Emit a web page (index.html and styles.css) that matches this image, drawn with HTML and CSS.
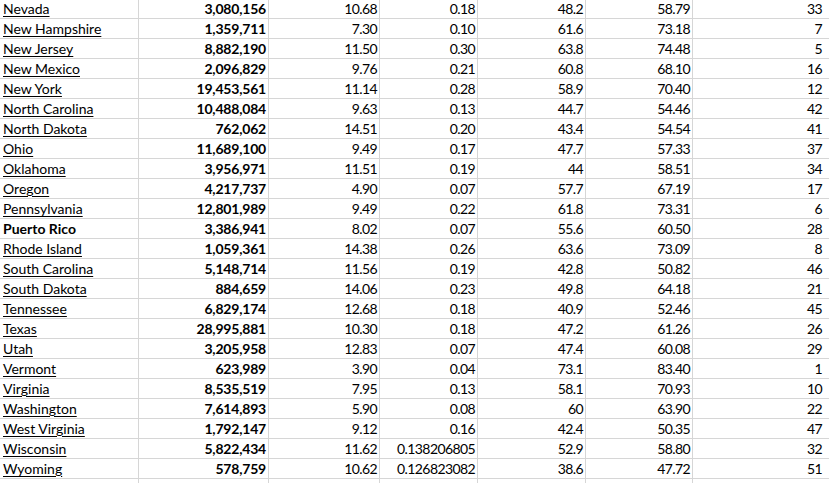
FILE: index.html
```html
<!DOCTYPE html>
<html>
<head>
<meta charset="utf-8">
<link rel="stylesheet" href="styles.css">
</head>
<body>
<div class="sheet">
<div class="row"><div class="c name link">Nevada</div><div class="c num pop">3,080,156</div><div class="c num">10.68</div><div class="c num">0.18</div><div class="c num">48.2</div><div class="c num">58.79</div><div class="c num last">33</div></div>
<div class="row"><div class="c name link">New Hampshire</div><div class="c num pop">1,359,711</div><div class="c num">7.30</div><div class="c num">0.10</div><div class="c num">61.6</div><div class="c num">73.18</div><div class="c num last">7</div></div>
<div class="row"><div class="c name link">New Jersey</div><div class="c num pop">8,882,190</div><div class="c num">11.50</div><div class="c num">0.30</div><div class="c num">63.8</div><div class="c num">74.48</div><div class="c num last">5</div></div>
<div class="row"><div class="c name link">New Mexico</div><div class="c num pop">2,096,829</div><div class="c num">9.76</div><div class="c num">0.21</div><div class="c num">60.8</div><div class="c num">68.10</div><div class="c num last">16</div></div>
<div class="row"><div class="c name link">New York</div><div class="c num pop">19,453,561</div><div class="c num">11.14</div><div class="c num">0.28</div><div class="c num">58.9</div><div class="c num">70.40</div><div class="c num last">12</div></div>
<div class="row"><div class="c name link">North Carolina</div><div class="c num pop">10,488,084</div><div class="c num">9.63</div><div class="c num">0.13</div><div class="c num">44.7</div><div class="c num">54.46</div><div class="c num last">42</div></div>
<div class="row"><div class="c name link">North Dakota</div><div class="c num pop">762,062</div><div class="c num">14.51</div><div class="c num">0.20</div><div class="c num">43.4</div><div class="c num">54.54</div><div class="c num last">41</div></div>
<div class="row"><div class="c name link">Ohio</div><div class="c num pop">11,689,100</div><div class="c num">9.49</div><div class="c num">0.17</div><div class="c num">47.7</div><div class="c num">57.33</div><div class="c num last">37</div></div>
<div class="row"><div class="c name link">Oklahoma</div><div class="c num pop">3,956,971</div><div class="c num">11.51</div><div class="c num">0.19</div><div class="c num">44</div><div class="c num">58.51</div><div class="c num last">34</div></div>
<div class="row"><div class="c name link">Oregon</div><div class="c num pop">4,217,737</div><div class="c num">4.90</div><div class="c num">0.07</div><div class="c num">57.7</div><div class="c num">67.19</div><div class="c num last">17</div></div>
<div class="row"><div class="c name link">Pennsylvania</div><div class="c num pop">12,801,989</div><div class="c num">9.49</div><div class="c num">0.22</div><div class="c num">61.8</div><div class="c num">73.31</div><div class="c num last">6</div></div>
<div class="row"><div class="c name bold">Puerto Rico</div><div class="c num pop">3,386,941</div><div class="c num">8.02</div><div class="c num">0.07</div><div class="c num">55.6</div><div class="c num">60.50</div><div class="c num last">28</div></div>
<div class="row"><div class="c name link">Rhode Island</div><div class="c num pop">1,059,361</div><div class="c num">14.38</div><div class="c num">0.26</div><div class="c num">63.6</div><div class="c num">73.09</div><div class="c num last">8</div></div>
<div class="row"><div class="c name link">South Carolina</div><div class="c num pop">5,148,714</div><div class="c num">11.56</div><div class="c num">0.19</div><div class="c num">42.8</div><div class="c num">50.82</div><div class="c num last">46</div></div>
<div class="row"><div class="c name link">South Dakota</div><div class="c num pop">884,659</div><div class="c num">14.06</div><div class="c num">0.23</div><div class="c num">49.8</div><div class="c num">64.18</div><div class="c num last">21</div></div>
<div class="row"><div class="c name link">Tennessee</div><div class="c num pop">6,829,174</div><div class="c num">12.68</div><div class="c num">0.18</div><div class="c num">40.9</div><div class="c num">52.46</div><div class="c num last">45</div></div>
<div class="row"><div class="c name link">Texas</div><div class="c num pop">28,995,881</div><div class="c num">10.30</div><div class="c num">0.18</div><div class="c num">47.2</div><div class="c num">61.26</div><div class="c num last">26</div></div>
<div class="row"><div class="c name link">Utah</div><div class="c num pop">3,205,958</div><div class="c num">12.83</div><div class="c num">0.07</div><div class="c num">47.4</div><div class="c num">60.08</div><div class="c num last">29</div></div>
<div class="row"><div class="c name link">Vermont</div><div class="c num pop">623,989</div><div class="c num">3.90</div><div class="c num">0.04</div><div class="c num">73.1</div><div class="c num">83.40</div><div class="c num last">1</div></div>
<div class="row"><div class="c name link">Virginia</div><div class="c num pop">8,535,519</div><div class="c num">7.95</div><div class="c num">0.13</div><div class="c num">58.1</div><div class="c num">70.93</div><div class="c num last">10</div></div>
<div class="row"><div class="c name link">Washington</div><div class="c num pop">7,614,893</div><div class="c num">5.90</div><div class="c num">0.08</div><div class="c num">60</div><div class="c num">63.90</div><div class="c num last">22</div></div>
<div class="row"><div class="c name link">West Virginia</div><div class="c num pop">1,792,147</div><div class="c num">9.12</div><div class="c num">0.16</div><div class="c num">42.4</div><div class="c num">50.35</div><div class="c num last">47</div></div>
<div class="row"><div class="c name link">Wisconsin</div><div class="c num pop">5,822,434</div><div class="c num">11.62</div><div class="c num">0.138206805</div><div class="c num">52.9</div><div class="c num">58.80</div><div class="c num last">32</div></div>
<div class="row"><div class="c name link">Wyoming</div><div class="c num pop">578,759</div><div class="c num">10.62</div><div class="c num">0.126823082</div><div class="c num">38.6</div><div class="c num">47.72</div><div class="c num last">51</div></div>
<div class="row"><div class="c name"></div><div class="c num pop"></div><div class="c num"></div><div class="c num"></div><div class="c num"></div><div class="c num"></div><div class="c num last"></div></div>
</div>
</body>
</html>
```
FILE: styles.css
```css
html, body {
  margin: 0;
  padding: 0;
  background: #ffffff;
}
body {
  width: 829px;
  height: 483px;
  overflow: hidden;
  font-family: Lato, "Liberation Sans", sans-serif;
  font-size: 14px;
  color: #000000;
}
.sheet {
  margin-top: -1px;
}
.row {
  display: grid;
  grid-template-columns: 139px 130px 111px 98px 108px 107px 1fr;
  height: 20px;
}
.c {
  box-sizing: border-box;
  height: 20px;
  line-height: 19px;
  border-right: 1px solid #d6d6d6;
  border-bottom: 1px solid #d6d6d6;
  white-space: nowrap;
  overflow: hidden;
}
.c.last {
  border-right: none;
}
.name {
  padding-left: 3px;
}
.link {
  text-decoration: underline;
  text-underline-offset: 2px;
}
.bold {
  font-weight: bold;
}
.num {
  text-align: right;
  padding-right: 2px;
  letter-spacing: -0.6px;
}
.pop {
  font-weight: bold;
  letter-spacing: -0.2px;
}
.last {
  padding-right: 7px;
}
```
